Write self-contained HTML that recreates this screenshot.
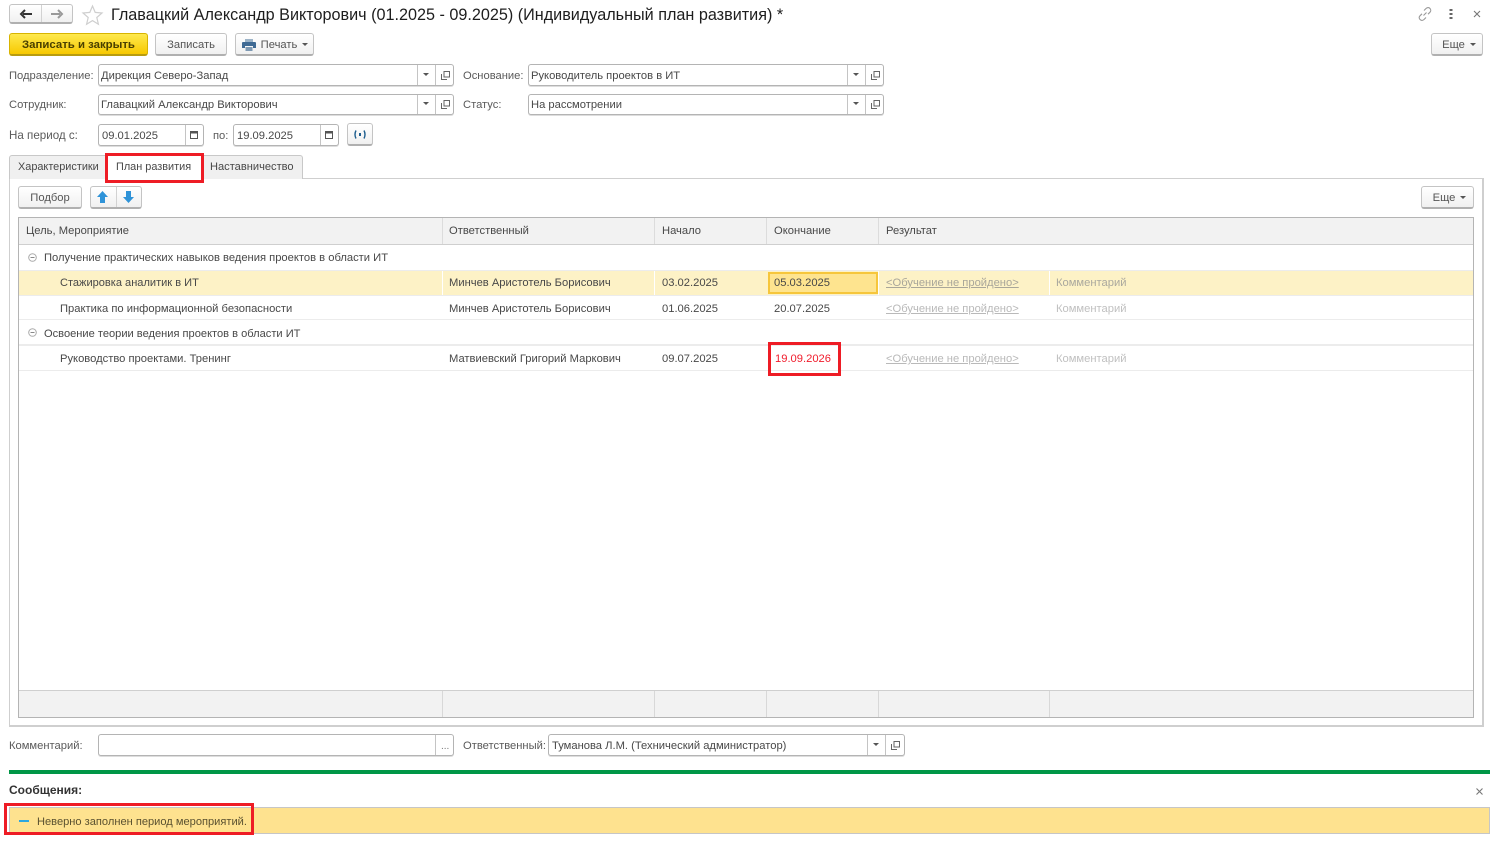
<!DOCTYPE html>
<html lang="ru">
<head>
<meta charset="utf-8">
<title>Индивидуальный план развития</title>
<style>
html,body{margin:0;padding:0;width:1500px;height:844px;overflow:hidden;background:#fff}
body{font-family:"Liberation Sans",Arial,sans-serif;font-size:11.2px;color:#484848;position:relative}
#w{position:absolute;left:0;top:0;width:1500px;height:844px;filter:blur(.3px)}
.a,.t,.b,.i,.v{position:absolute;box-sizing:border-box}
.t{white-space:nowrap;line-height:16px}
.l{color:#5a5a5a}
.b{border:1px solid #c4c4c4;border-bottom:2px solid #b0b0b0;border-radius:3px;background:linear-gradient(#fff,#f0f0f0);text-align:center;color:#555;line-height:19px;white-space:nowrap}
.i{border:1px solid #b4b4b4;border-radius:3px;background:#fff;box-shadow:0 1px 0 #ddd}
.v{top:0;bottom:0;width:1px;background:#c4c4c4}
.caret{display:inline-block;width:0;height:0;border:3px solid transparent;border-top:3px solid #555;border-bottom:0;vertical-align:2px;margin-left:5px}
.ca{position:absolute;width:0;height:0;border:3px solid transparent;border-top:3px solid #555;border-bottom:0}
.red{position:absolute;box-sizing:border-box;border:3px solid #ee1c25}
.g{color:#c0c0c0}
.u{color:#b9b9b9;text-decoration:underline}
svg{position:absolute;overflow:visible}
</style>
</head>
<body>
<div id="w">

<!-- navigation -->
<div class="b" style="left:9px;top:4px;width:64px;height:20px"></div>
<div class="a" style="left:41px;top:5px;width:1px;height:17px;background:#d2d2d2"></div>
<svg style="left:19px;top:9px" width="14" height="10"><path d="M13 5H4M6 1L2 5l4 4" fill="none" stroke="#333" stroke-width="2"/></svg>
<svg style="left:50px;top:9px" width="14" height="10"><path d="M1 5h9M8 1l4 4-4 4" fill="none" stroke="#999" stroke-width="2"/></svg>
<svg style="left:82px;top:5px" width="21" height="20"><path d="M10.500 1l2.700 6.400 6.800.6-5.200 4.500 1.600 6.700-5.900-3.600-5.900 3.600 1.600-6.700L1 8l6.800-.6z" fill="#fff" stroke="#cfcfcf" stroke-width="1.200"/></svg>
<div class="t" style="left:111px;top:5px;font-size:16.2px;line-height:20px;color:#1e1e1e">Главацкий Александр Викторович (01.2025 - 09.2025) (Индивидуальный план развития) *</div>

<svg style="left:1417px;top:6px" width="16" height="16"><path d="M6.500 9.500l3-3M7 4.500l2-2c1.500-1.300 3-1.200 4 0 1 1 1 2.600 0 3.700l-2 2M9 11.500l-2 2c-1.300 1.200-2.900 1.200-4 0-1-1.100-1-2.600 0-3.700l2-2" fill="none" stroke="#999" stroke-width="1.100"/></svg>
<svg style="left:1449px;top:9px" width="4" height="10"><path d="M0.500 0h3v2h-3zM0.500 4h3v2h-3zM0.500 8h3v2h-3z" fill="#666"/></svg>
<svg style="left:1473px;top:10px" width="8" height="8"><path d="M1 1l6 6M7 1L1 7" stroke="#777" stroke-width="1.100"/></svg>

<!-- command bar -->
<div class="b" style="left:9px;top:33px;width:139px;height:23px;background:linear-gradient(#fee94e,#f7c800);border-color:#d8b400;border-bottom-color:#b89c10;color:#4a4000;line-height:22px;font-weight:700;font-size:11.400px">Записать и закрыть</div>
<div class="b" style="left:155px;top:33px;width:72px;height:23px;line-height:22px">Записать</div>
<div class="b" style="left:235px;top:33px;width:79px;height:23px;line-height:22px;padding-left:20px">Печать<span class="caret"></span></div>
<svg style="left:242px;top:39px" width="14" height="12"><path d="M3 0h8v3H3z" fill="#9db4c8"/><path d="M1 3h12q1 0 1 1v5h-3V7H3v2H0V4q0-1 1-1z" fill="#3f6a94"/><path d="M3.500 8h7v4h-7z" fill="#7d99b3"/></svg>
<div class="b" style="left:1431px;top:33px;width:52px;height:23px;line-height:22px;padding-left:4px">Еще<span class="caret"></span></div>

<!-- form rows -->
<div class="t l" style="left:9px;top:68px">Подразделение:</div>
<div class="i" style="left:98px;top:64px;width:356px;height:22px"><div class="v" style="left:318px"></div><div class="v" style="left:336px"></div></div>
<div class="t" style="left:101px;top:68px">Дирекция Северо-Запад</div>
<div class="ca" style="left:423px;top:73px"></div>
<svg style="left:441px;top:71px" width="9" height="9"><path d="M3 .5h5.500V6H3zM.5 3v5.500H6" fill="none" stroke="#666"/></svg>

<div class="t l" style="left:463px;top:68px">Основание:</div>
<div class="i" style="left:528px;top:64px;width:356px;height:22px"><div class="v" style="left:318px"></div><div class="v" style="left:336px"></div></div>
<div class="t" style="left:531px;top:68px">Руководитель проектов в ИТ</div>
<div class="ca" style="left:853px;top:73px"></div>
<svg style="left:871px;top:71px" width="9" height="9"><path d="M3 .5h5.500V6H3zM.5 3v5.500H6" fill="none" stroke="#666"/></svg>

<div class="t l" style="left:9px;top:97px">Сотрудник:</div>
<div class="i" style="left:98px;top:94px;width:356px;height:21px"><div class="v" style="left:318px"></div><div class="v" style="left:336px"></div></div>
<div class="t" style="left:101px;top:97px">Главацкий Александр Викторович</div>
<div class="ca" style="left:423px;top:102px"></div>
<svg style="left:441px;top:100px" width="9" height="9"><path d="M3 .5h5.500V6H3zM.5 3v5.500H6" fill="none" stroke="#666"/></svg>

<div class="t l" style="left:463px;top:97px">Статус:</div>
<div class="i" style="left:528px;top:94px;width:356px;height:21px"><div class="v" style="left:318px"></div><div class="v" style="left:336px"></div></div>
<div class="t" style="left:531px;top:97px">На рассмотрении</div>
<div class="ca" style="left:853px;top:102px"></div>
<svg style="left:871px;top:100px" width="9" height="9"><path d="M3 .5h5.500V6H3zM.5 3v5.500H6" fill="none" stroke="#666"/></svg>

<div class="t l" style="left:9px;top:128px;font-size:11.6px">На период с:</div>
<div class="i" style="left:98px;top:124px;width:106px;height:22px"><div class="v" style="left:86px"></div></div>
<div class="t" style="left:102px;top:128px">09.01.2025</div>
<svg style="left:190px;top:130px" width="8" height="9"><path d="M.5 1.500h7v7h-7z" fill="#fff" stroke="#555"/><path d="M0 1h8v2.500H0z" fill="#555"/></svg>
<div class="t l" style="left:213px;top:128px">по:</div>
<div class="i" style="left:233px;top:124px;width:106px;height:22px"><div class="v" style="left:86px"></div></div>
<div class="t" style="left:237px;top:128px">19.09.2025</div>
<svg style="left:325px;top:130px" width="8" height="9"><path d="M.5 1.500h7v7h-7z" fill="#fff" stroke="#555"/><path d="M0 1h8v2.500H0z" fill="#555"/></svg>
<div class="b" style="left:347px;top:123px;width:26px;height:23px"></div>
<svg style="left:353px;top:130px" width="14" height="9"><path d="M3 .5Q1 4.500 3 8.500M11 .5q2 4 0 8" fill="none" stroke="#1f5f8f" stroke-width="1.400"/><path d="M6 3h2v3H6z" fill="#1f5f8f"/></svg>

<!-- panel -->
<div class="a" style="left:9px;top:178px;width:1475px;height:549px;border:1px solid #cfcfcf;border-bottom-width:2px;border-right-width:2px;box-sizing:border-box"></div>

<!-- tabs -->
<div class="a" style="left:9px;top:155px;width:294px;height:24px;background:#f0f0f0;border:1px solid #c8c8c8;border-bottom:0;border-radius:3px 3px 0 0;box-sizing:border-box"></div>
<div class="t" style="left:18px;top:159px;font-size:10.9px">Характеристики</div>
<div class="a" style="left:108px;top:156px;width:93px;height:24px;background:#fff"></div>
<div class="t" style="left:116px;top:159px;font-size:10.9px">План развития</div>
<div class="t" style="left:210px;top:159px;font-size:11.1px">Наставничество</div>
<div class="red" style="left:105px;top:153px;width:99px;height:30px"></div>

<div class="b" style="left:18px;top:186px;width:64px;height:23px;line-height:22px">Подбор</div>
<div class="b" style="left:90px;top:186px;width:52px;height:23px"></div>
<div class="a" style="left:116px;top:187px;width:1px;height:20px;background:#d2d2d2"></div>
<svg style="left:97px;top:191px" width="11" height="12"><path d="M5.500 0L11 6H8v6H3V6H0z" fill="#2f93d8"/></svg>
<svg style="left:123px;top:191px" width="11" height="12"><path d="M5.500 12L11 6H8V0H3v6H0z" fill="#2f93d8"/></svg>
<div class="b" style="left:1421px;top:186px;width:53px;height:23px;line-height:22px;padding-left:4px">Еще<span class="caret"></span></div>

<!-- table -->
<div class="a" style="left:18px;top:217px;width:1456px;height:501px;border:1px solid #b4b4b4;box-sizing:border-box;overflow:hidden;background:#fff">
  <div class="a" style="left:0;top:0;right:0;height:27px;background:#f2f2f2;border-bottom:1px solid #cfcfcf"></div>
  <div class="v" style="left:423px;top:0;bottom:auto;height:26px;background:#dcdcdc"></div>
  <div class="v" style="left:635px;top:0;bottom:auto;height:26px;background:#dcdcdc"></div>
  <div class="v" style="left:747px;top:0;bottom:auto;height:26px;background:#dcdcdc"></div>
  <div class="v" style="left:859px;top:0;bottom:auto;height:26px;background:#dcdcdc"></div>
  <div class="a" style="left:0;top:52px;right:0;height:1px;background:#ececec"></div>
  <div class="a" style="left:0;top:53px;right:0;height:24px;background:#fdf2c6"></div>
  <div class="a" style="left:0;top:77px;right:0;height:1px;background:#ececec"></div>
  <div class="a" style="left:0;top:101px;right:0;height:1px;background:#ececec"></div>
  <div class="a" style="left:0;top:126px;right:0;height:2px;background:#ececec"></div>
  <div class="a" style="left:0;top:152px;right:0;height:1px;background:#ececec"></div>
  <div class="a" style="left:0;top:472px;right:0;height:27px;background:#f2f2f2;border-top:1px solid #cfcfcf"></div>
  <div class="v" style="left:423px;top:473px;background:#d8d8d8"></div>
  <div class="v" style="left:635px;top:473px;background:#d8d8d8"></div>
  <div class="v" style="left:747px;top:473px;background:#d8d8d8"></div>
  <div class="v" style="left:859px;top:473px;background:#d8d8d8"></div>
  <div class="v" style="left:1030px;top:473px;background:#d8d8d8"></div>
  <div class="v" style="left:423px;top:53px;bottom:auto;height:24px;background:#fff"></div>
  <div class="v" style="left:635px;top:53px;bottom:auto;height:24px;background:#fff"></div>
  <div class="v" style="left:859px;top:53px;bottom:auto;height:24px;background:#fff"></div>
  <div class="v" style="left:1030px;top:53px;bottom:auto;height:24px;background:#fff"></div>
  <div class="a" style="left:749px;top:54px;width:110px;height:22px;background:#fee48f;border:2px solid #f6c63c;box-sizing:border-box"></div>
</div>

<div class="t" style="left:26px;top:223px">Цель, Мероприятие</div>
<div class="t" style="left:449px;top:223px">Ответственный</div>
<div class="t" style="left:662px;top:223px">Начало</div>
<div class="t" style="left:774px;top:223px">Окончание</div>
<div class="t" style="left:886px;top:223px">Результат</div>

<svg style="left:28px;top:253px" width="9" height="9"><circle cx="4.500" cy="4.500" r="3.800" fill="#fff" stroke="#aaa"/><path d="M2.500 4.500h4" stroke="#888"/></svg>
<div class="t" style="left:44px;top:250px">Получение практических навыков ведения проектов в области ИТ</div>

<div class="t" style="left:60px;top:275px;font-size:11.05px">Стажировка аналитик в ИТ</div>
<div class="t" style="left:449px;top:275px">Минчев Аристотель Борисович</div>
<div class="t" style="left:662px;top:275px">03.02.2025</div>
<div class="t" style="left:774px;top:275px">05.03.2025</div>
<div class="t u" style="left:886px;top:275px;color:#a9a69a">&lt;Обучение не пройдено&gt;</div>
<div class="t g" style="left:1056px;top:275px;color:#aaa89e">Комментарий</div>

<div class="t" style="left:60px;top:301px">Практика по информационной безопасности</div>
<div class="t" style="left:449px;top:301px">Минчев Аристотель Борисович</div>
<div class="t" style="left:662px;top:301px">01.06.2025</div>
<div class="t" style="left:774px;top:301px">20.07.2025</div>
<div class="t u" style="left:886px;top:301px">&lt;Обучение не пройдено&gt;</div>
<div class="t g" style="left:1056px;top:301px">Комментарий</div>

<svg style="left:28px;top:328px" width="9" height="9"><circle cx="4.500" cy="4.500" r="3.800" fill="#fff" stroke="#aaa"/><path d="M2.500 4.500h4" stroke="#888"/></svg>
<div class="t" style="left:44px;top:326px;font-size:11.1px">Освоение теории ведения проектов в области ИТ</div>

<div class="t" style="left:60px;top:351px">Руководство проектами. Тренинг</div>
<div class="t" style="left:449px;top:351px">Матвиевский Григорий Маркович</div>
<div class="t" style="left:662px;top:351px">09.07.2025</div>
<div class="t" style="left:775px;top:351px;color:#f01c2c">19.09.2026</div>
<div class="t u" style="left:886px;top:351px">&lt;Обучение не пройдено&gt;</div>
<div class="t g" style="left:1056px;top:351px">Комментарий</div>
<div class="red" style="left:768px;top:342px;width:73px;height:34px"></div>

<!-- bottom fields -->
<div class="t l" style="left:9px;top:738px">Комментарий:</div>
<div class="i" style="left:98px;top:734px;width:356px;height:22px"><div class="v" style="left:336px"></div></div>
<div class="t" style="left:441px;top:739px;font-size:10px;color:#777">...</div>
<div class="t l" style="left:463px;top:738px">Ответственный:</div>
<div class="i" style="left:548px;top:734px;width:357px;height:22px"><div class="v" style="left:318px"></div><div class="v" style="left:336px"></div></div>
<div class="t" style="left:552px;top:738px">Туманова Л.М. (Технический администратор)</div>
<div class="ca" style="left:873px;top:743px"></div>
<svg style="left:891px;top:741px" width="9" height="9"><path d="M3 .5h5.500V6H3zM.5 3v5.500H6" fill="none" stroke="#666"/></svg>

<!-- messages -->
<div class="a" style="left:9px;top:770px;width:1481px;height:4px;background:#009646"></div>
<div class="t" style="left:9px;top:782px;font-weight:700;font-size:12px;color:#333">Сообщения:</div>
<svg style="left:1476px;top:788px" width="7" height="7"><path d="M.5.5l6 6M6.500.5l-6 6" stroke="#777" stroke-width="1.100"/></svg>
<div class="a" style="left:9px;top:807px;width:1481px;height:27px;background:#fee28f;border:1px solid #c6c6c6;box-sizing:border-box"></div>
<div class="a" style="left:19px;top:820px;width:10px;height:2px;background:#2da7e0"></div>
<div class="t" style="left:37px;top:814px;color:#5a5130;font-size:11.1px">Неверно заполнен период мероприятий.</div>
<div class="red" style="left:4px;top:803px;width:250px;height:32px"></div>

</div>
</body>
</html>
